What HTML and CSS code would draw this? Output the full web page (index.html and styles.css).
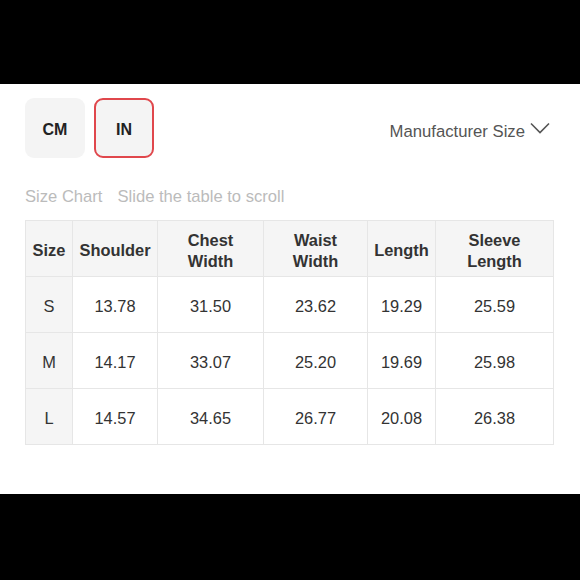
FILE: index.html
```html
<!DOCTYPE html>
<html>
<head>
<meta charset="utf-8">
<link rel="stylesheet" href="styles.css">
</head>
<body>
<div class="bar"></div>
<main class="sheet">
  <div class="top">
    <div class="units">
      <div class="unit">CM</div>
      <div class="unit active">IN</div>
    </div>
    <div class="maker">
      <span>Manufacturer Size</span>
      <svg class="chev" width="20" height="12" viewBox="0 0 20 12"><path d="M1 1.5 L10 10.5 L19 1.5" fill="none" stroke="#555" stroke-width="1.6"/></svg>
    </div>
  </div>
  <div class="hint"><span>Size Chart</span><span>Slide the table to scroll</span></div>
  <table class="chart">
    <colgroup>
      <col style="width:47px"><col style="width:85px"><col style="width:106px"><col style="width:104px"><col style="width:68px"><col style="width:118px">
    </colgroup>
    <thead>
      <tr><th>Size</th><th>Shoulder</th><th>Chest<br>Width</th><th>Waist<br>Width</th><th>Length</th><th>Sleeve<br>Length</th></tr>
    </thead>
    <tbody>
      <tr><td class="sz">S</td><td>13.78</td><td>31.50</td><td>23.62</td><td>19.29</td><td>25.59</td></tr>
      <tr><td class="sz">M</td><td>14.17</td><td>33.07</td><td>25.20</td><td>19.69</td><td>25.98</td></tr>
      <tr><td class="sz">L</td><td>14.57</td><td>34.65</td><td>26.77</td><td>20.08</td><td>26.38</td></tr>
    </tbody>
  </table>
</main>
<div class="bar bottom"></div>
</body>
</html>
```
FILE: styles.css
```css
html, body {
  margin: 0;
  padding: 0;
  background: #000;
  font-family: "Liberation Sans", Arial, sans-serif;
}
.bar {
  height: 84px;
  background: #000;
}
.bar.bottom {
  height: 86px;
}
.sheet {
  background: #fff;
  height: 410px;
  box-sizing: border-box;
  padding: 14px 26px 0 25px;
}
.top {
  display: flex;
  justify-content: space-between;
  align-items: center;
}
.units {
  display: flex;
  gap: 9px;
}
.unit {
  width: 60px;
  height: 60px;
  box-sizing: border-box;
  border-radius: 9px;
  background: #f4f4f4;
  display: flex;
  align-items: center;
  justify-content: center;
  font-weight: bold;
  font-size: 16px;
  color: #222;
  padding-top: 3px;
}
.unit.active {
  border: 2px solid #e0474c;
}
.maker {
  display: flex;
  align-items: flex-start;
  gap: 5px;
  font-size: 16.7px;
  color: #555;
  margin-top: 8px;
  margin-right: 4px;
}
.chev {
  margin-top: 0px;
}
.hint {
  margin-top: 29px;
  font-size: 16.6px;
  line-height: 20px;
  color: #bbb;
  display: flex;
  gap: 15px;
}
.chart {
  margin-top: 13px;
  border-collapse: collapse;
  table-layout: fixed;
  width: 528px;
  font-size: 16.4px;
  color: #333;
}
.chart th, .chart td {
  border: 1px solid #e6e6e6;
  text-align: center;
  height: 56px;
  padding: 4px 0 0;
  box-sizing: border-box;
}
.chart th {
  background: #f5f5f5;
  font-weight: bold;
  line-height: 21px;
  color: #333;
}
.chart td.sz {
  background: #f5f5f5;
}
```
